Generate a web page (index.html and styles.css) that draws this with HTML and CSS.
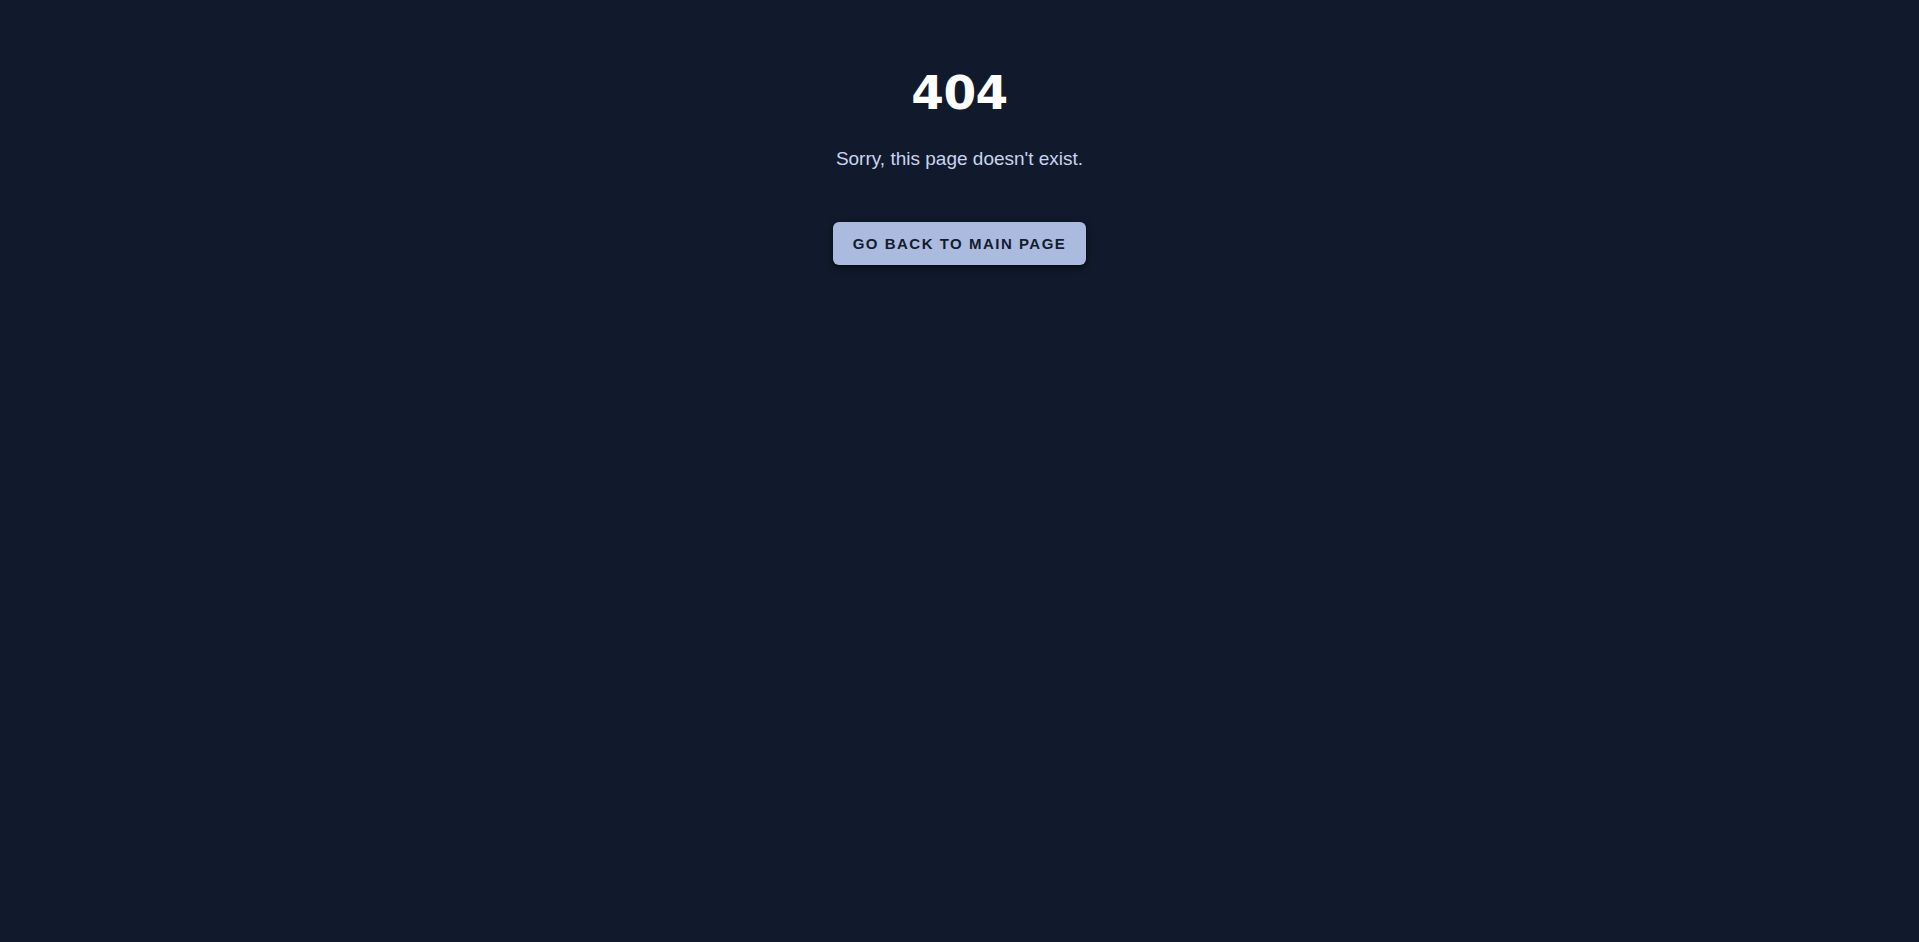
FILE: index.html
```html
<!DOCTYPE html>
<html lang="en">
<head>
<meta charset="utf-8">
<title>404</title>
<link rel="stylesheet" href="styles.css">
</head>
<body>
<main class="notfound">
  <h1 class="notfound__code">404</h1>
  <p class="notfound__text">Sorry, this page doesn't exist.</p>
  <a class="notfound__button" href="#">Go back to main page</a>
</main>
</body>
</html>
```

FILE: styles.css
```css
html, body {
  margin: 0;
  padding: 0;
  background: #111a2c;
  min-height: 100%;
}
body {
  font-family: "Liberation Sans", Arial, sans-serif;
  height: 942px;
}
.notfound {
  display: flex;
  flex-direction: column;
  align-items: center;
  padding-top: 63px;
}
.notfound__code {
  margin: 0;
  font-family: "DejaVu Sans", "Liberation Sans", sans-serif;
  font-size: 47px;
  line-height: 60px;
  font-weight: 700;
  letter-spacing: -0.5px;
  color: #ffffff;
}
.notfound__text {
  margin: 22px 0 0;
  font-size: 19px;
  line-height: 28px;
  color: #c9d4f0;
}
.notfound__button {
  margin-top: 49px;
  height: 43px;
  line-height: 43px;
  padding: 0 20px 0 20px;
  box-sizing: border-box;
  font-size: 15px;
  font-weight: 700;
  letter-spacing: 1.5px;
  text-transform: uppercase;
  text-decoration: none;
  color: #141b2e;
  background: #abbbdf;
  border-radius: 6px;
  box-shadow: 0 3px 8px rgba(0, 0, 0, 0.45), 0 1px 3px rgba(0, 0, 0, 0.3);
}
```
